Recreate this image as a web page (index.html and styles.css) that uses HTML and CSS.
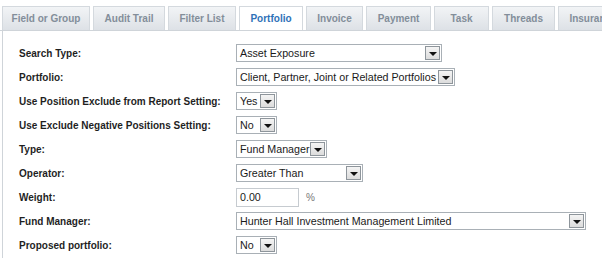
FILE: index.html
```html
<!DOCTYPE html>
<html lang="en">
<head>
    <meta charset="UTF-8">
    <title>Portfolio Search</title>
    <link rel="stylesheet" href="styles.css">
</head>
<body>
    <div class="tabs">
        <div class="tab tab-field">Field or Group</div>
        <div class="tab tab-audit">Audit Trail</div>
        <div class="tab tab-filter">Filter List</div>
        <div class="tab tab-portfolio active">Portfolio</div>
        <div class="tab tab-invoice">Invoice</div>
        <div class="tab tab-payment">Payment</div>
        <div class="tab tab-task">Task</div>
        <div class="tab tab-threads">Threads</div>
        <div class="tab tab-insurance">Insurance</div>
    </div>

    <div class="panel">
        <div class="row">
            <label>Search Type:</label>
            <span class="select w-search"><span class="value">Asset Exposure</span><span class="arrow"></span></span>
        </div>
        <div class="row">
            <label>Portfolio:</label>
            <span class="select w-portfolio"><span class="value">Client, Partner, Joint or Related Portfolios</span><span class="arrow"></span></span>
        </div>
        <div class="row">
            <label>Use Position Exclude from Report Setting:</label>
            <span class="select w-yesno"><span class="value">Yes</span><span class="arrow"></span></span>
        </div>
        <div class="row">
            <label>Use Exclude Negative Positions Setting:</label>
            <span class="select w-yesno"><span class="value">No</span><span class="arrow"></span></span>
        </div>
        <div class="row">
            <label>Type:</label>
            <span class="select w-type"><span class="value">Fund Manager</span><span class="arrow"></span></span>
        </div>
        <div class="row">
            <label>Operator:</label>
            <span class="select w-operator"><span class="value">Greater Than</span><span class="arrow"></span></span>
        </div>
        <div class="row">
            <label>Weight:</label>
            <span class="field"><span class="input">0.00</span><span class="unit">%</span></span>
        </div>
        <div class="row">
            <label>Fund Manager:</label>
            <span class="select w-manager"><span class="value">Hunter Hall Investment Management Limited</span><span class="arrow"></span></span>
        </div>
        <div class="row">
            <label>Proposed portfolio:</label>
            <span class="select w-yesno"><span class="value">No</span><span class="arrow"></span></span>
        </div>
    </div>
</body>
</html>
```
FILE: styles.css
```css
/* Reset */
* {
    margin: 0;
    padding: 0;
    box-sizing: border-box;
}

body {
    font-family: 'Liberation Sans', Arial, sans-serif;
    background: #ffffff;
    color: #1a1a1a;
    width: 602px;
    height: 258px;
    overflow: hidden;
}

/* Tab strip */
.tabs {
    display: flex;
    gap: 3px;
    padding: 6px 0 0 2px;
    height: 31px;
    border-bottom: 1px solid #cfd4d9;
    white-space: nowrap;
    overflow: hidden;
}

.tab {
    flex-shrink: 0;
    height: 24px;
    border: 1px solid #d4d9de;
    border-bottom: none;
    background: linear-gradient(#f2f4f6, #dde1e6);
    color: #838e9a;
    font-size: 10px;
    font-weight: bold;
    line-height: 23px;
    text-align: center;
    overflow: hidden;
}

.tab.active {
    height: 25px;
    background: #ffffff;
    color: #2f72b8;
}

.tab-field { width: 88px; }
.tab-audit { width: 72px; }
.tab-filter { width: 68px; }
.tab-portfolio { width: 64px; }
.tab-invoice { width: 57px; }
.tab-payment { width: 65px; }
.tab-task { width: 55px; }
.tab-threads { width: 63px; }
.tab-insurance { width: 70px; }

/* Form panel */
.panel {
    border-left: 1px solid #cfd4d9;
    margin-left: 2px;
    height: 227px;
    padding: 10px 0 0 16px;
}

.row {
    display: flex;
    align-items: center;
    height: 24px;
}

.row label {
    width: 217px;
    flex-shrink: 0;
    font-size: 10px;
    font-weight: bold;
    color: #1f1f1f;
}

/* Drop-down look */
.select {
    display: inline-flex;
    align-items: center;
    justify-content: space-between;
    height: 18px;
    border: 1px solid #a9b0b6;
    background: #ffffff;
    font-size: 10.7px;
}

.select .value {
    padding-left: 3px;
    white-space: nowrap;
}

.select .arrow {
    position: relative;
    width: 15px;
    height: 14px;
    margin-right: 1px;
    border: 1px solid #8e959b;
    background: linear-gradient(#f4f4f4, #dcdcdc);
}

.select .arrow::after {
    content: "";
    position: absolute;
    left: 3px;
    top: 5px;
    border-left: 4px solid transparent;
    border-right: 4px solid transparent;
    border-top: 4px solid #111111;
}

.w-search { width: 206px; }
.w-portfolio { width: 219px; }
.w-yesno { width: 41px; }
.w-type { width: 91px; }
.w-operator { width: 127px; }
.w-manager { width: 350px; }

/* Text field */
.field {
    display: inline-flex;
    align-items: center;
}

.input {
    width: 63px;
    height: 19px;
    line-height: 17px;
    padding-left: 3px;
    border: 1px solid #c6cbd0;
    font-size: 10.7px;
}

.unit {
    margin-left: 7px;
    font-size: 10px;
    color: #777777;
}
```
